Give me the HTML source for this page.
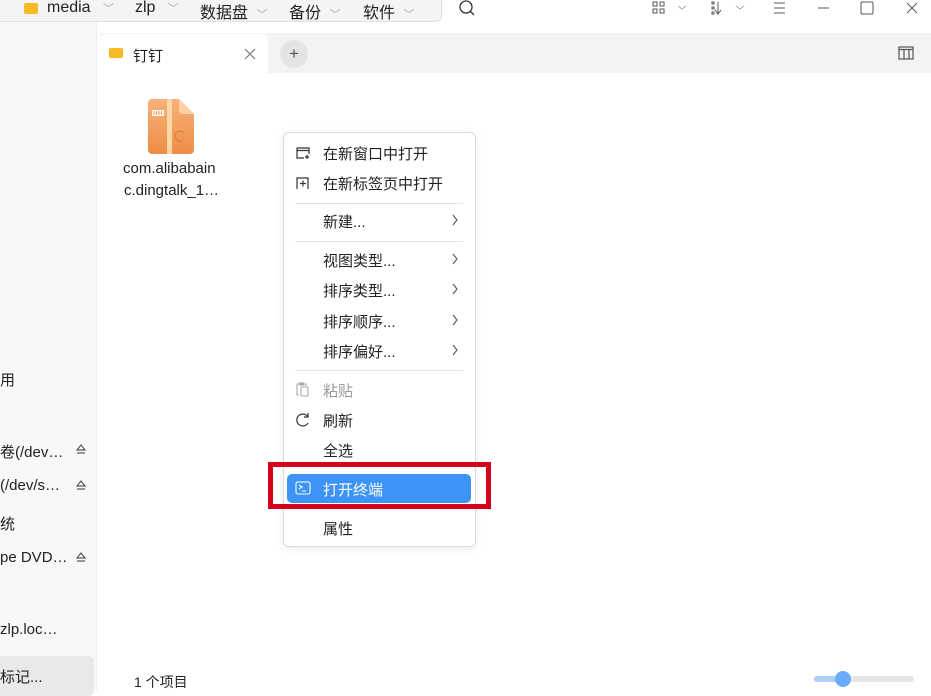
<!DOCTYPE html>
<html><head><meta charset="utf-8"><style>
*{margin:0;padding:0;box-sizing:border-box}
body{width:931px;height:690px;overflow:hidden;background:#fff;font-family:"Liberation Sans","Noto Sans CJK SC",sans-serif;color:#222;position:relative;font-size:14px}
.a{position:absolute}
.side{left:0;top:22px;width:97px;height:668px;background:#f8f8f8;border-right:1px solid #eee}
.crumb{left:-10px;top:-8px;width:452px;height:30px;background:#f4f4f4;border:1px solid #e0e0e0;border-radius:0 0 6px 0}
.t{white-space:nowrap}
.mi{position:absolute;left:323px;font-size:15px;color:#222;white-space:nowrap}
.ch{position:absolute;left:451px}
.sep{position:absolute;left:295px;width:168px;height:1px;background:#e4e4e4}
.gray{color:#999}
.sb{position:absolute;left:0;font-size:15px;white-space:nowrap}
</style></head><body>
<div class="a side"></div>
<div class="a crumb"></div>
<div class="a" style="left:24px;top:3px;width:14px;height:11px;background:#f7b924;border-radius:2px"></div>
<div class="a t" style="left:47px;top:-1px;font-size:16px">media <span style="color:#aaa;font-size:11px;margin-left:8px">﹀</span></div>
<div class="a t" style="left:135px;top:-1px;font-size:16px">zlp <span style="color:#aaa;font-size:11px;margin-left:8px">﹀</span></div>
<div class="a t" style="left:200px;top:-1px;font-size:16px">数据盘 <span style="color:#aaa;font-size:11px;margin-left:4px">﹀</span></div>
<div class="a t" style="left:289px;top:-1px;font-size:16px">备份 <span style="color:#aaa;font-size:11px;margin-left:4px">﹀</span></div>
<div class="a t" style="left:363px;top:-1px;font-size:16px">软件 <span style="color:#aaa;font-size:11px;margin-left:4px">﹀</span></div>
<svg class="a" style="left:458px;top:0" width="18" height="18"><circle cx="8" cy="7" r="6" fill="none" stroke="#333" stroke-width="1.3"/><line x1="12" y1="11" x2="16" y2="15" stroke="#333" stroke-width="1.3"/></svg>
<svg class="a" style="left:650px;top:0" width="281" height="18" fill="none" stroke="#555" stroke-width="1">
<rect x="3" y="2" width="4" height="4"/><rect x="10" y="2" width="4" height="4"/><rect x="3" y="9" width="4" height="4"/><rect x="10" y="9" width="4" height="4"/>
<path d="M28 6l4 3 4-3" stroke="#aaa"/>
<rect x="62" y="2" width="2" height="2"/><rect x="62" y="7" width="2" height="2"/><rect x="62" y="12" width="2" height="2"/><path d="M68 2v11M65 10l3 4 3-4"/>
<path d="M86 6l4 3 4-3" stroke="#aaa"/>
<path d="M124 3h11M124 8h11M124 13h11"/>
<path d="M168 8h11"/>
<rect x="211" y="2" width="12" height="12" rx="1.5"/>
<path d="M257 3l10 10M267 3l-10 10"/>
</svg>
<div class="a" style="left:100px;top:33px;width:831px;height:40px;background:#f3f3f3"></div>
<div class="a" style="left:100px;top:34px;width:168px;height:40px;background:#fff;border-radius:6px 6px 0 0"></div>
<div class="a" style="left:109px;top:48px;width:14px;height:10px;background:#f7b924;border-radius:2px"></div>
<div class="a t" style="left:133px;top:45px;font-size:15px">钉钉</div>
<svg class="a" style="left:244px;top:48px" width="12" height="12" stroke="#777" stroke-width="1.1"><path d="M1 1l10 10M11 1L1 11"/></svg>
<div class="a" style="left:280px;top:40px;width:28px;height:28px;border-radius:50%;background:#e4e4e4;text-align:center;line-height:27px;color:#555;font-size:17px">+</div>
<svg class="a" style="left:898px;top:46px" width="17" height="14" fill="none" stroke="#555" stroke-width="1.2"><rect x="1" y="1" width="14" height="12"/><path d="M1 3.5h14M6 3.5v9.5M11 3.5v9.5"/></svg>
<svg class="a" style="left:148px;top:99px" width="48" height="56"><defs><linearGradient id="g" x1="0" y1="0" x2="0" y2="1"><stop offset="0" stop-color="#f7b27a"/><stop offset="1" stop-color="#ee8d44"/></linearGradient></defs>
<path d="M4 0h27l15 15v36a4 4 0 0 1-4 4H4a4 4 0 0 1-4-4V4a4 4 0 0 1 4-4z" fill="url(#g)"/><rect x="19" y="0" width="5" height="55" fill="#fcd6a6"/><path d="M31 0v11a4 4 0 0 0 4 4h11z" fill="#fbd0a6"/><rect x="4" y="11" width="12" height="6" fill="#fff"/><path d="M6 12v4M8.5 12v4M11 12v4M13.5 12v4" stroke="#e88c45"/><path d="M36 34a5 5 0 1 0 -3 8" fill="none" stroke="#d9762f" stroke-width="1"/></svg>
<div class="a t" style="left:123px;top:160px;font-size:15px;color:#222">com.alibabain</div>
<div class="a t" style="left:124px;top:182px;font-size:15px;color:#222">c.dingtalk_1…</div>
<div class="sb" style="top:369px">用</div>
<div class="sb" style="top:441px">卷(/dev…</div>
<div class="sb" style="top:477px">(/dev/s…</div>
<div class="sb" style="top:513px">统</div>
<div class="sb" style="top:549px">pe DVD…</div>
<svg class="a" style="left:76px;top:444px" width="10" height="130" fill="none" stroke="#333" stroke-width="1"><path d="M1 6l4-5 4 5zM1 9h8"/><path d="M1 42l4-5 4 5zM1 45h8"/><path d="M1 114l4-5 4 5zM1 117h8"/></svg>
<div class="sb" style="top:621px">zlp.loc…</div>
<div class="a" style="left:-10px;top:656px;width:104px;height:40px;background:#e9e9e9;border-radius:6px"></div>
<div class="sb" style="top:666px">标记...</div>
<div class="a t" style="left:134px;top:672px;font-size:14px">1 个项目</div>
<div class="a" style="left:814px;top:676px;width:100px;height:6px;border-radius:3px;background:#e6e6e6"></div>
<div class="a" style="left:814px;top:676px;width:30px;height:6px;border-radius:3px;background:#add0fb"></div>
<div class="a" style="left:835px;top:671px;width:16px;height:16px;border-radius:50%;background:#6aabfb"></div>
<div class="a" style="left:283px;top:132px;width:193px;height:415px;background:#fff;border:1px solid #dcdcdc;border-radius:6px;box-shadow:0 2px 8px rgba(0,0,0,.08)"></div>
<svg class="a" style="left:295px;top:146px" width="16" height="14" fill="none" stroke="#333" stroke-width="1.2"><path d="M9 12H2V2h12v6M2 4.5h12M12 9v4M10 11h4"/></svg>
<div class="mi" style="top:143px">在新窗口中打开</div>
<svg class="a" style="left:295px;top:176px" width="16" height="14" fill="none" stroke="#333" stroke-width="1.2"><path d="M2 13V2h11v11M5 7.5h6M8 4.5v6"/></svg>
<div class="mi" style="top:173px">在新标签页中打开</div>
<div class="sep" style="top:203px"></div>
<div class="mi" style="top:211px">新建...</div>
<div class="sep" style="top:241px"></div>
<div class="mi" style="top:250px">视图类型...</div>
<div class="mi" style="top:280px">排序类型...</div>
<div class="mi" style="top:311px">排序顺序...</div>
<div class="mi" style="top:341px">排序偏好...</div>
<svg class="a" style="left:450px;top:214px" width="10" height="145" fill="none" stroke="#555" stroke-width="1.1"><path d="M3 1l4 5-4 5"/><path d="M3 40l4 5-4 5"/><path d="M3 70l4 5-4 5"/><path d="M3 101l4 5-4 5"/><path d="M3 131l4 5-4 5"/></svg>
<div class="sep" style="top:370px"></div>
<svg class="a" style="left:296px;top:382px" width="14" height="16" fill="none" stroke="#aaa" stroke-width="1.1"><path d="M3 13H1V2h9v2"/><rect x="5" y="5" width="7" height="9" rx="1"/><rect x="3.5" y="1" width="4" height="2"/></svg>
<div class="mi gray" style="top:380px">粘贴</div>
<svg class="a" style="left:295px;top:412px" width="16" height="16" fill="none" stroke="#333" stroke-width="1.2"><path d="M13 5A6 6 0 1 0 13 11"/><path d="M13 1v4H9"/></svg>
<div class="mi" style="top:410px">刷新</div>
<div class="mi" style="top:440px">全选</div>
<div class="a" style="left:268px;top:462px;width:223px;height:47px;border:5px solid #d3021a"></div>
<div class="a" style="left:287px;top:474px;width:184px;height:29px;background:#3d94f6;border-radius:5px"></div>
<svg class="a" style="left:295px;top:481px" width="16" height="14" fill="none" stroke="#fff" stroke-width="1.1"><rect x="1" y="1" width="14" height="12" rx="2"/><path d="M4 4l3 2-3 2M7 10h4"/></svg>
<div class="mi" style="top:479px;color:#fff">打开终端</div>
<div class="mi" style="top:518px">属性</div>
</body></html>
